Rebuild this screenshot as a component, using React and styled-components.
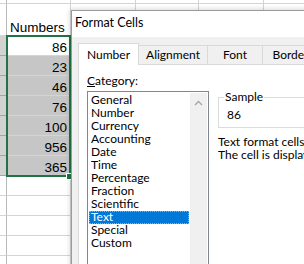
import React from 'react';
import styled, { createGlobalStyle } from 'styled-components';

const Global = createGlobalStyle`
  html, body { margin: 0; padding: 0; background: #fff; overflow: hidden; }
  body { width: 304px; height: 264px; }
`;

const Stage = styled.div`
  position: relative;
  width: 304px;
  height: 264px;
  overflow: hidden;
  background: #fff;
`;

const Sheet = styled.div`
  display: grid;
  grid-template-columns: 7px 64px 65px 63px 65px 64px;
  grid-template-rows: 4px 32px;
  grid-auto-rows: 20px;
  font-family: "Liberation Sans", Arial, sans-serif;
  font-size: 13.5px;
  color: #000;
`;

const Cell = styled.div`
  box-sizing: border-box;
  border-right: 1px solid ${p => (p.$head ? '#b9b9b9' : '#d4d4d4')};
  border-bottom: 1px solid ${p => (p.$head && p.$sel ? '#a6a6a6' : '#d4d4d4')};
  background: ${p => (p.$sel ? (p.$head ? '#d2d2d2' : '#c6c6c6') : '#fff')};
  display: flex;
  align-items: flex-end;
  justify-content: ${p => (p.$num ? 'flex-end' : 'flex-start')};
  padding: 0 3px 0 3px;
  line-height: 15px;
  white-space: nowrap;
  overflow: hidden;
`;

const Selection = styled.div`
  position: absolute;
  left: 6px;
  top: 35px;
  width: 65px;
  height: 142px;
  box-sizing: border-box;
  border: 2px solid #217346;
  pointer-events: none;
`;

const FillHandle = styled.div`
  position: absolute;
  left: 67px;
  top: 174px;
  width: 5px;
  height: 5px;
  background: #217346;
  box-shadow: 0 0 0 1px #fff;
`;

const Dialog = styled.div`
  position: absolute;
  left: 71px;
  top: 10px;
  width: 420px;
  height: 340px;
  box-sizing: border-box;
  background: #f0f0f0;
  border: 1px solid #9b9b9b;
  box-shadow: -1px -1px 5px rgba(0, 0, 0, 0.16);
  font-family: Lato, "Segoe UI", sans-serif;
  font-size: 12px;
  color: #000;
  display: flex;
  flex-direction: column;
  overflow: hidden;
`;

const TitleBar = styled.div`
  flex-shrink: 0;
  height: 26px;
  background: #fff;
  display: flex;
  align-items: center;
  padding: 0 0 4px 3px;
  box-sizing: border-box;
  font-size: 12.5px;
`;

const Body = styled.div`
  flex: 1;
  display: flex;
  flex-direction: column;
  padding: 6px 0 0 6px;
`;

const TabStrip = styled.div`
  flex-shrink: 0;
  display: flex;
  align-items: flex-end;
  height: 21px;
  position: relative;
  z-index: 1;
`;

const Tab = styled.div`
  box-sizing: border-box;
  width: ${p => p.$w}px;
  height: ${p => (p.$active ? 22 : 19)}px;
  margin-bottom: ${p => (p.$active ? -1 : 0)}px;
  background: ${p => (p.$active ? '#fff' : '#f0f0f0')};
  border: 1px solid #d9d9d9;
  border-bottom: none;
  border-left: ${p => (p.$noLeft ? 'none' : '1px solid #d9d9d9')};
  display: flex;
  align-items: center;
  justify-content: center;
  line-height: 16px;
  white-space: nowrap;
`;

const Page = styled.div`
  flex: 1;
  background: #fff;
  border: 1px solid #d9d9d9;
  padding: 8px 0 0 8px;
  display: flex;
  gap: 9px;
`;

const LeftCol = styled.div`
  width: 122px;
  display: flex;
  flex-direction: column;
`;

const Label = styled.div`
  line-height: 16px;
  height: 16px;
`;

const ListBox = styled.div`
  margin-top: 2px;
  box-sizing: border-box;
  width: 122px;
  height: 220px;
  border: 1px solid #828790;
  padding: 1px;
  display: flex;
  gap: 1px;
  background: #fff;
`;

const Items = styled.div`
  width: 101px;
  display: flex;
  flex-direction: column;
  padding-top: 1px;
`;

const Item = styled.div`
  height: 13px;
  line-height: 12px;
  padding-left: 2px;
  box-sizing: border-box;
  white-space: nowrap;
  background: ${p => (p.$selected ? '#0078d7' : 'transparent')};
  color: ${p => (p.$selected ? '#fff' : '#000')};
  outline: ${p => (p.$selected ? '1px dotted #f5a040' : 'none')};
  outline-offset: -1px;
`;

const ScrollBar = styled.div`
  width: 17px;
  background: #f0f0f0;
  display: flex;
  flex-direction: column;
  align-items: center;
`;

const ArrowBtn = styled.div`
  height: 20px;
  width: 17px;
  display: flex;
  align-items: center;
  justify-content: center;
`;

const RightCol = styled.div`
  flex: 1;
  display: flex;
  flex-direction: column;
  min-width: 0;
`;

const Group = styled.fieldset`
  margin: 16px 0 0 0;
  padding: 0 0 0 5px;
  border: 1px solid #dcdcdc;
  height: 39px;
  box-sizing: border-box;
`;

const Legend = styled.legend`
  padding: 0 1px;
  line-height: 16px;
`;

const SampleValue = styled.div`
  padding: 2px 0 0 3px;
  line-height: 16px;
`;

const Desc = styled.div`
  margin-top: 7px;
  line-height: 13px;
  white-space: nowrap;
`;

const rowsData = [
  { v: '' },
  { v: 'Numbers' },
  { v: '86', num: true, sel: true, active: true },
  { v: '23', num: true, sel: true },
  { v: '46', num: true, sel: true },
  { v: '76', num: true, sel: true },
  { v: '100', num: true, sel: true },
  { v: '956', num: true, sel: true },
  { v: '365', num: true, sel: true },
  { v: '' },
  { v: '' },
  { v: '' },
  { v: '' },
  { v: '' },
];

const categories = [
  'General', 'Number', 'Currency', 'Accounting', 'Date', 'Time',
  'Percentage', 'Fraction', 'Scientific', 'Text', 'Special', 'Custom',
];

export default function App() {
  return (
    <Stage>
      <Global />
      <Sheet>
        {rowsData.map((r, i) => (
          <React.Fragment key={i}>
            <Cell $head $sel={r.sel} />
            <Cell $num={r.num} $sel={r.sel && !r.active}>{r.v}</Cell>
            <Cell />
            <Cell />
            <Cell />
            <Cell />
          </React.Fragment>
        ))}
      </Sheet>
      <Selection />
      <FillHandle />
      <Dialog>
        <TitleBar>Format Cells</TitleBar>
        <Body>
          <TabStrip>
            <Tab $active $w={61}>Number</Tab>
            <Tab $w={69} $noLeft>Alignment</Tab>
            <Tab $w={55} $noLeft>Font</Tab>
            <Tab $w={56} $noLeft>Border</Tab>
          </TabStrip>
          <Page>
            <LeftCol>
              <Label><u>C</u>ategory:</Label>
              <ListBox>
                <Items>
                  {categories.map(c => (
                    <Item key={c} $selected={c === 'Text'}>{c}</Item>
                  ))}
                </Items>
                <ScrollBar>
                  <ArrowBtn>
                    <svg width="9" height="6" viewBox="0 0 9 6">
                      <path d="M1 5 L4.5 1.5 L8 5" fill="none" stroke="#a6a6a6" strokeWidth="1.4" />
                    </svg>
                  </ArrowBtn>
                </ScrollBar>
              </ListBox>
            </LeftCol>
            <RightCol>
              <Group>
                <Legend>Sample</Legend>
                <SampleValue>86</SampleValue>
              </Group>
              <Desc>
                Text format cells are treated as text even when a number is in the cell.
                <br />
                The cell is displayed exactly as entered.
              </Desc>
            </RightCol>
          </Page>
        </Body>
      </Dialog>
    </Stage>
  );
}
